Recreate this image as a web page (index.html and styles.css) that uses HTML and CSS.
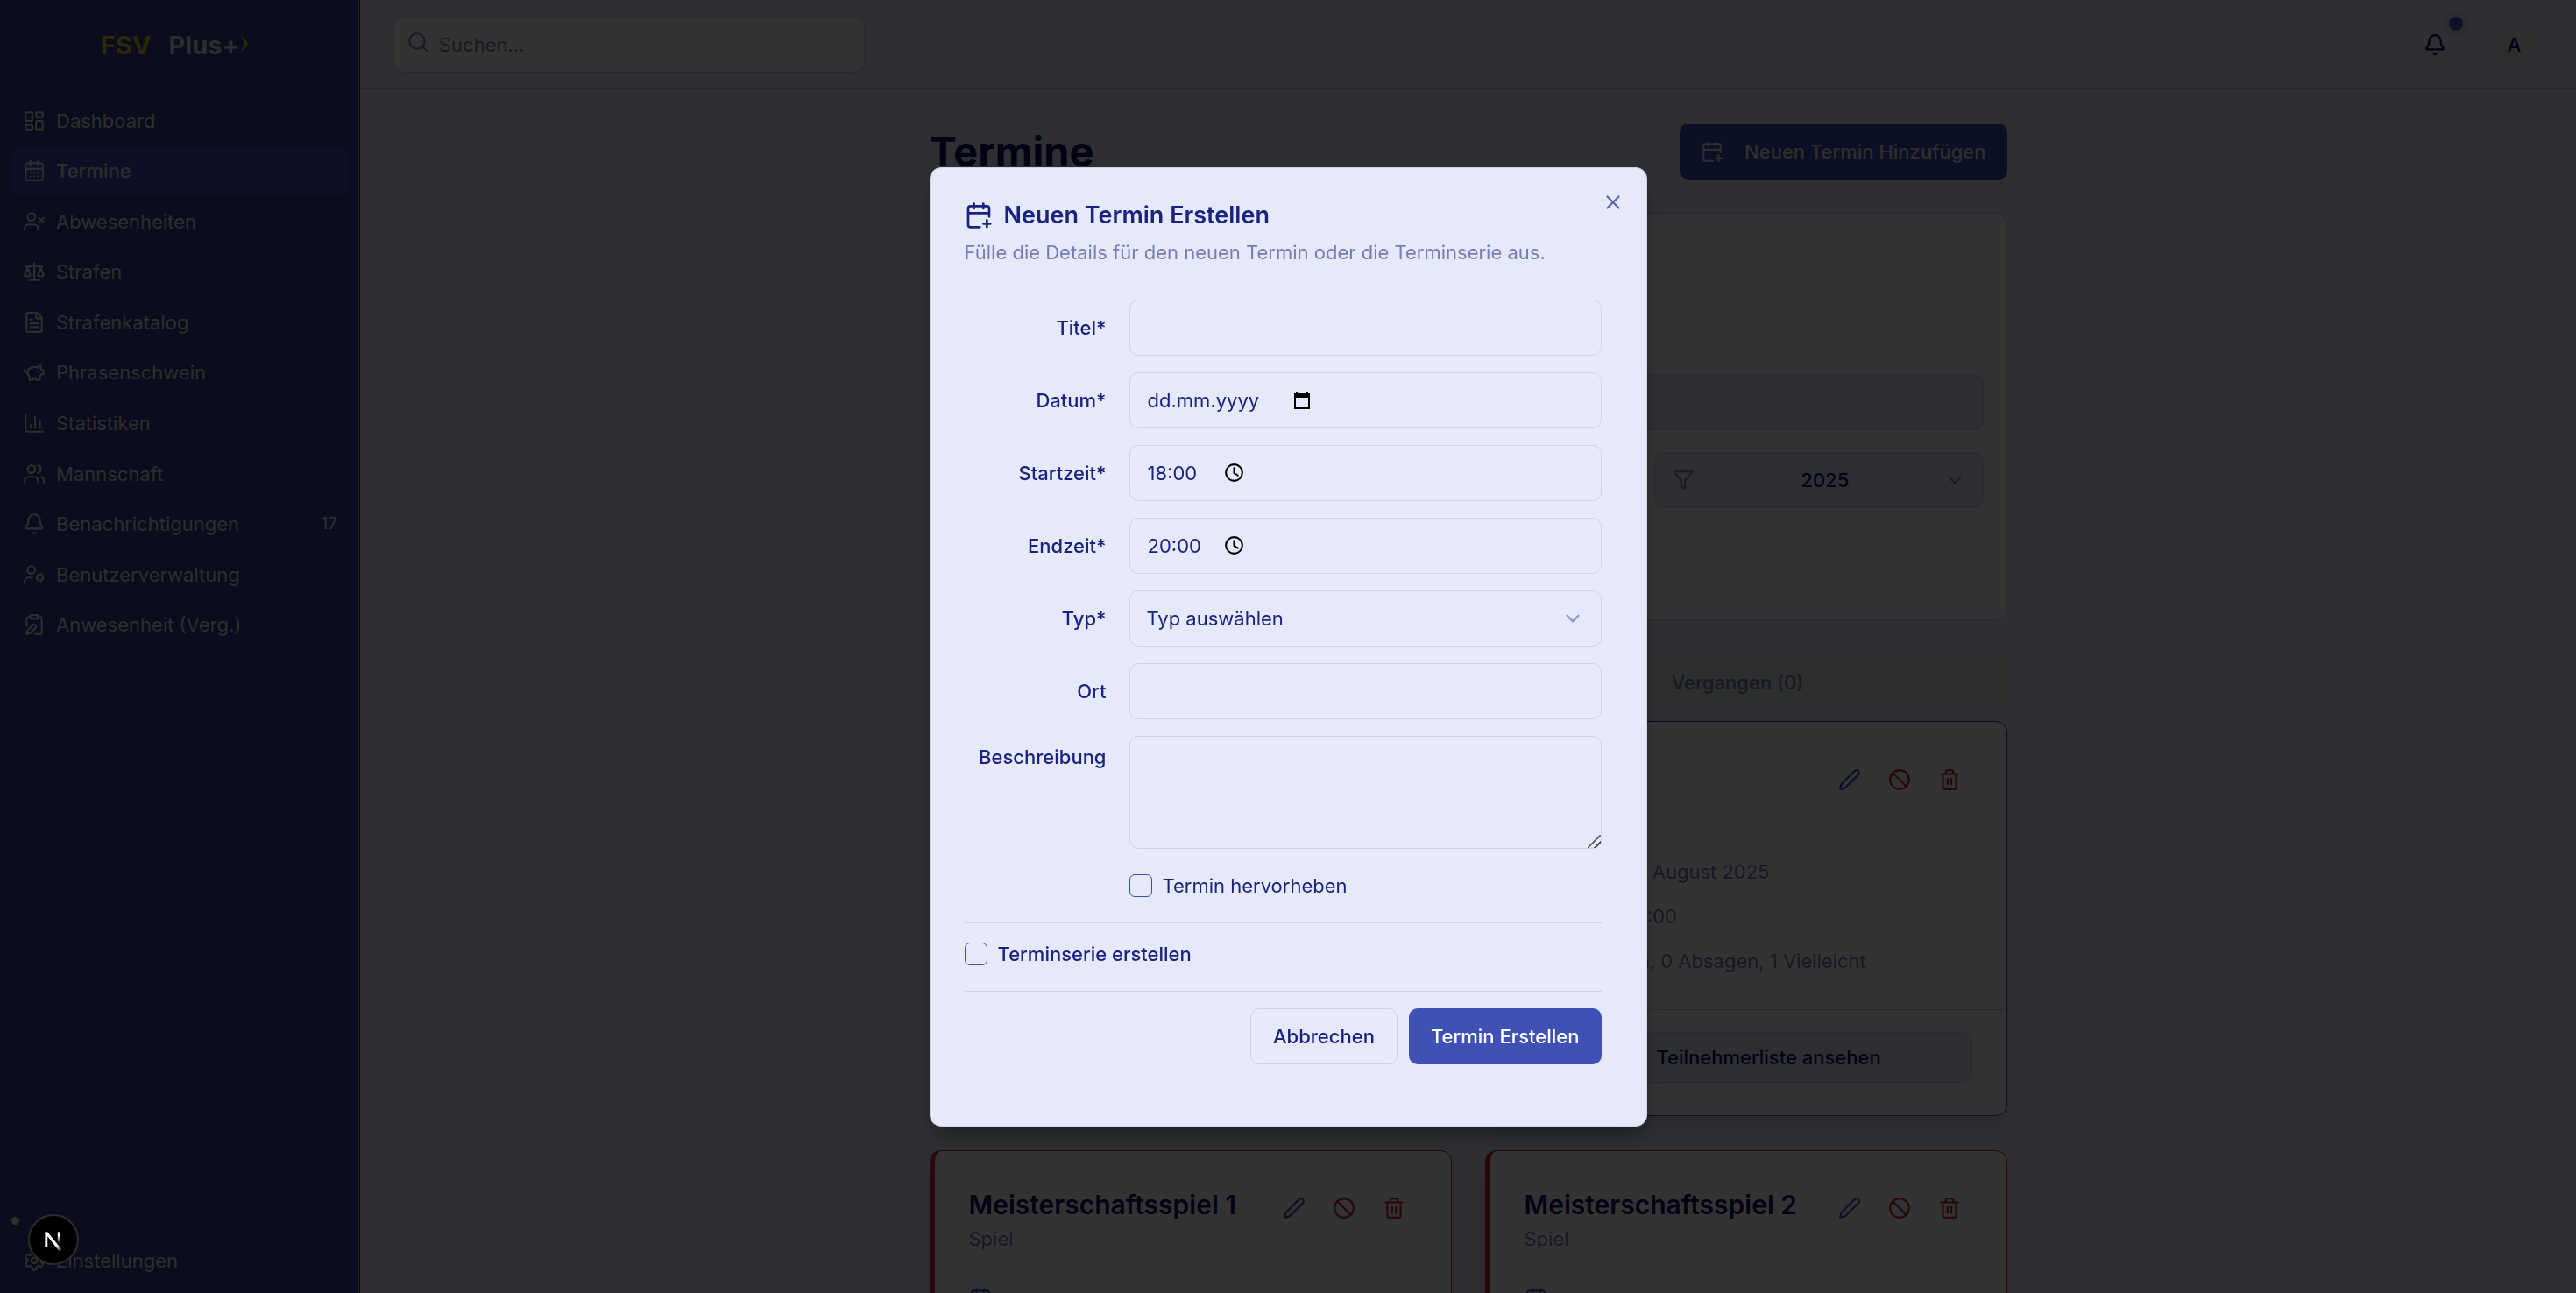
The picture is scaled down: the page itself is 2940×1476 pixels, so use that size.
FILE: index.html
```html
<!DOCTYPE html>
<html lang="de">
<head>
<meta charset="utf-8">
<meta name="viewport" content="width=device-width, initial-scale=1">
<title>Termine – FSV Plus+</title>
<link rel="stylesheet" href="styles.css">
</head>
<body>
<svg class="sprite" aria-hidden="true">
  <symbol id="i-dashboard" viewBox="0 0 24 24"><rect width="7" height="9" x="3" y="3" rx="1"/><rect width="7" height="5" x="14" y="3" rx="1"/><rect width="7" height="9" x="14" y="12" rx="1"/><rect width="7" height="5" x="3" y="16" rx="1"/></symbol>
  <symbol id="i-calendar-days" viewBox="0 0 24 24"><path d="M8 2v4M16 2v4"/><rect width="18" height="18" x="3" y="4" rx="2"/><path d="M3 10h18M8 14h.01M12 14h.01M16 14h.01M8 18h.01M12 18h.01M16 18h.01"/></symbol>
  <symbol id="i-user-x" viewBox="0 0 24 24"><path d="M16 21v-2a4 4 0 0 0-4-4H6a4 4 0 0 0-4 4v2"/><circle cx="9" cy="7" r="4"/><path d="m17 8 5 5M22 8l-5 5"/></symbol>
  <symbol id="i-scale" viewBox="0 0 24 24"><path d="m16 16 3-8 3 8c-.87.65-1.92 1-3 1s-2.13-.35-3-1ZM2 16l3-8 3 8c-.87.65-1.92 1-3 1s-2.13-.35-3-1ZM7 21h10M12 3v18M3 7h2c2 0 5-1 7-2 2 1 5 2 7 2h2"/></symbol>
  <symbol id="i-file" viewBox="0 0 24 24"><path d="M15 2H6a2 2 0 0 0-2 2v16a2 2 0 0 0 2 2h12a2 2 0 0 0 2-2V7Z"/><path d="M14 2v4a2 2 0 0 0 2 2h4M10 9H8M16 13H8M16 17H8"/></symbol>
  <symbol id="i-pig" viewBox="0 0 24 24"><path d="M19 5c-1.500 0-2.800 1.400-3 2-3.500-1.500-11-.3-11 5 0 1.800 0 3 2 4.500V20h4v-2h3v2h4v-4c1-.5 1.700-1 2-2h2v-4h-2c0-1-.5-1.500-1-2V5z"/><path d="M2 9v1c0 1.100.9 2 2 2h1M16 11h.01"/></symbol>
  <symbol id="i-chart" viewBox="0 0 24 24"><path d="M3 3v16a2 2 0 0 0 2 2h16M18 17V9M13 17V5M8 17v-3"/></symbol>
  <symbol id="i-users" viewBox="0 0 24 24"><path d="M16 21v-2a4 4 0 0 0-4-4H6a4 4 0 0 0-4 4v2"/><circle cx="9" cy="7" r="4"/><path d="M22 21v-2a4 4 0 0 0-3-3.870M16 3.130a4 4 0 0 1 0 7.750"/></symbol>
  <symbol id="i-bell" viewBox="0 0 24 24"><path d="M10.268 21a2 2 0 0 0 3.464 0M3.262 15.326A1 1 0 0 0 4 17h16a1 1 0 0 0 .74-1.673C19.410 13.956 18 12.499 18 8A6 6 0 0 0 6 8c0 4.499-1.411 5.956-2.738 7.326"/></symbol>
  <symbol id="i-user-cog" viewBox="0 0 24 24"><circle cx="18" cy="15" r="3"/><circle cx="9" cy="7" r="4"/><path d="M10 15H6a4 4 0 0 0-4 4v2M21.700 16.400l-.9-.3M15.200 13.900l-.9-.3M16.600 18.700l.3-.9M19.100 12.200l.3-.9M19.600 18.700l-.4-1M16.800 12.300l-.4-1M14.300 16.600l1-.4M20.700 13.800l1-.4"/></symbol>
  <symbol id="i-clipboard-pen" viewBox="0 0 24 24"><rect width="8" height="4" x="8" y="2" rx="1"/><path d="M10.420 12.610a2.100 2.100 0 1 1 2.970 2.970L7.950 21 4 22l.99-3.950zM16 4h2a2 2 0 0 1 2 2v14a2 2 0 0 1-2 2h-5.500M4 13.500V6a2 2 0 0 1 2-2h2"/></symbol>
  <symbol id="i-settings" viewBox="0 0 24 24"><path d="M12.220 2h-.44a2 2 0 0 0-2 2v.18a2 2 0 0 1-1 1.730l-.43.25a2 2 0 0 1-2 0l-.15-.08a2 2 0 0 0-2.730.73l-.22.38a2 2 0 0 0 .73 2.730l.15.1a2 2 0 0 1 1 1.720v.51a2 2 0 0 1-1 1.740l-.15.09a2 2 0 0 0-.73 2.730l.22.38a2 2 0 0 0 2.730.73l.15-.08a2 2 0 0 1 2 0l.43.25a2 2 0 0 1 1 1.730V20a2 2 0 0 0 2 2h.44a2 2 0 0 0 2-2v-.18a2 2 0 0 1 1-1.730l.43-.25a2 2 0 0 1 2 0l.15.08a2 2 0 0 0 2.730-.73l.22-.39a2 2 0 0 0-.73-2.730l-.15-.08a2 2 0 0 1-1-1.740v-.5a2 2 0 0 1 1-1.740l.15-.09a2 2 0 0 0 .73-2.730l-.22-.38a2 2 0 0 0-2.730-.73l-.15.08a2 2 0 0 1-2 0l-.43-.25a2 2 0 0 1-1-1.730V4a2 2 0 0 0-2-2z"/><circle cx="12" cy="12" r="3"/></symbol>
  <symbol id="i-search" viewBox="0 0 24 24"><circle cx="11" cy="11" r="8"/><path d="m21 21-4.300-4.300"/></symbol>
  <symbol id="i-calendar-plus" viewBox="0 0 24 24"><path d="M8 2v4M16 2v4M21 13V6a2 2 0 0 0-2-2H5a2 2 0 0 0-2 2v14a2 2 0 0 0 2 2h8M3 10h18M16 19h6M19 16v6"/></symbol>
  <symbol id="i-filter" viewBox="0 0 24 24"><path d="M22 3H2l8 9.460V19l4 2v-8.540z"/></symbol>
  <symbol id="i-chevron" viewBox="0 0 24 24"><path d="m6 9 6 6 6-6"/></symbol>
  <symbol id="i-pencil" viewBox="0 0 24 24"><path d="M21.174 6.812a1 1 0 0 0-3.986-3.987L3.842 16.174a2 2 0 0 0-.5.830l-1.321 4.352a.5.5 0 0 0 .623.622l4.353-1.320a2 2 0 0 0 .830-.497z"/></symbol>
  <symbol id="i-ban" viewBox="0 0 24 24"><circle cx="12" cy="12" r="10"/><path d="m4.900 4.900 14.200 14.200"/></symbol>
  <symbol id="i-trash" viewBox="0 0 24 24"><path d="M3 6h18M19 6v14a2 2 0 0 1-2 2H7a2 2 0 0 1-2-2V6M8 6V4a2 2 0 0 1 2-2h4a2 2 0 0 1 2 2v2M10 11v6M14 11v6"/></symbol>
  <symbol id="i-clock" viewBox="0 0 24 24"><circle cx="12" cy="12" r="9"/><path d="M12 7v5.500l4 2.500"/></symbol>
  <symbol id="i-x" viewBox="0 0 24 24"><path d="M18 6 6 18M6 6l12 12"/></symbol>
</svg>

<div class="app">
  <aside class="sidebar">
    <div class="logo"><span class="logo-club">FSV</span><span>Plus+</span><svg class="logo-mark" viewBox="0 0 10 20"><path d="M1 0 10 10 1 19 5 10Z"/></svg></div>
    <nav class="nav">
      <a class="nav-item" href="#"><svg class="icon"><use href="#i-dashboard"/></svg>Dashboard</a>
      <a class="nav-item active" href="#"><svg class="icon"><use href="#i-calendar-days"/></svg>Termine</a>
      <a class="nav-item" href="#"><svg class="icon"><use href="#i-user-x"/></svg>Abwesenheiten</a>
      <a class="nav-item" href="#"><svg class="icon"><use href="#i-scale"/></svg>Strafen</a>
      <a class="nav-item" href="#"><svg class="icon"><use href="#i-file"/></svg>Strafenkatalog</a>
      <a class="nav-item" href="#"><svg class="icon"><use href="#i-pig"/></svg>Phrasenschwein</a>
      <a class="nav-item" href="#"><svg class="icon"><use href="#i-chart"/></svg>Statistiken</a>
      <a class="nav-item" href="#"><svg class="icon"><use href="#i-users"/></svg>Mannschaft</a>
      <a class="nav-item" href="#"><svg class="icon"><use href="#i-bell"/></svg>Benachrichtigungen<span class="count">17</span></a>
      <a class="nav-item" href="#"><svg class="icon"><use href="#i-user-cog"/></svg>Benutzerverwaltung</a>
      <a class="nav-item" href="#"><svg class="icon"><use href="#i-clipboard-pen"/></svg>Anwesenheit (Verg.)</a>
    </nav>
    <div class="sidebar-foot">
      <span class="foot-dot"></span>
      <a class="nav-item" href="#"><svg class="icon"><use href="#i-settings"/></svg>Einstellungen</a>
    </div>
  </aside>

  <div class="page">
    <header class="topbar">
      <div class="search">
        <svg class="icon"><use href="#i-search"/></svg>
        <input type="search" placeholder="Suchen..." aria-label="Suchen">
      </div>
      <div class="top-actions">
        <button class="bell" type="button" aria-label="Benachrichtigungen"><svg class="icon"><use href="#i-bell"/></svg><span class="bell-dot"></span></button>
        <button class="avatar" type="button">A</button>
      </div>
    </header>

    <main class="content">
      <div class="page-head">
        <h1>Termine</h1>
        <button class="btn btn-primary btn-add" type="button"><svg class="icon"><use href="#i-calendar-plus"/></svg>Neuen Termin Hinzufügen</button>
      </div>

      <section class="filters">
        <input class="filter-field" type="text" aria-label="Termine durchsuchen">
        <div class="filter-grid">
          <div class="filter-select">
            <svg class="icon"><use href="#i-filter"/></svg>
            <select class="filter-field" aria-label="Jahr"><option>2025</option></select>
            <svg class="icon chevron"><use href="#i-chevron"/></svg>
          </div>
        </div>
      </section>

      <div class="tabs"><button class="tab" type="button">Vergangen (0)</button></div>

      <div class="cards">
        <article class="card card-featured">
          <div class="card-actions">
            <button class="act edit" type="button" aria-label="Bearbeiten"><svg class="icon"><use href="#i-pencil"/></svg></button>
            <button class="act" type="button" aria-label="Absagen"><svg class="icon"><use href="#i-ban"/></svg></button>
            <button class="act" type="button" aria-label="Löschen"><svg class="icon"><use href="#i-trash"/></svg></button>
          </div>
          <ul class="facts">
            <li>Montag, 1. August 2025</li>
            <li>18:00 – 20:00</li>
            <li>0 Zusagen, 0 Absagen, 1 Vielleicht</li>
          </ul>
          <div class="card-foot"><button class="btn btn-soft" type="button">Teilnehmerliste ansehen</button></div>
        </article>

        <article class="card card-match">
          <div class="card-head">
            <div><h2>Meisterschaftsspiel 1</h2><p>Spiel</p></div>
            <div class="card-actions">
              <button class="act edit" type="button" aria-label="Bearbeiten"><svg class="icon"><use href="#i-pencil"/></svg></button>
              <button class="act" type="button" aria-label="Absagen"><svg class="icon"><use href="#i-ban"/></svg></button>
              <button class="act" type="button" aria-label="Löschen"><svg class="icon"><use href="#i-trash"/></svg></button>
            </div>
          </div>
          <svg class="icon match-date"><use href="#i-calendar-days"/></svg>
        </article>

        <article class="card card-match">
          <div class="card-head">
            <div><h2>Meisterschaftsspiel 2</h2><p>Spiel</p></div>
            <div class="card-actions">
              <button class="act edit" type="button" aria-label="Bearbeiten"><svg class="icon"><use href="#i-pencil"/></svg></button>
              <button class="act" type="button" aria-label="Absagen"><svg class="icon"><use href="#i-ban"/></svg></button>
              <button class="act" type="button" aria-label="Löschen"><svg class="icon"><use href="#i-trash"/></svg></button>
            </div>
          </div>
          <svg class="icon match-date"><use href="#i-calendar-days"/></svg>
        </article>
      </div>
    </main>
  </div>
</div>

<div class="overlay">
  <div class="dialog" role="dialog" aria-modal="true" aria-labelledby="dlg-title">
    <button class="close" type="button" aria-label="Schließen"><svg class="icon"><use href="#i-x"/></svg></button>
    <h2 class="dialog-title" id="dlg-title"><svg class="icon"><use href="#i-calendar-plus"/></svg>Neuen Termin Erstellen</h2>
    <p class="dialog-desc">Fülle die Details für den neuen Termin oder die Terminserie aus.</p>

    <form class="form">
      <div class="row"><label for="titel">Titel*</label><input class="field" id="titel" type="text"></div>
      <div class="row"><label for="datum">Datum*</label>
        <div class="field picker"><input class="date" id="datum" type="text" value="dd.mm.yyyy"><svg class="cal" viewBox="0 0 24 24"><path fill-rule="evenodd" d="M5 2h2v2h10V2h2v2h2v18H3V4h2zM5 9v11h14V9z"/></svg></div></div>
      <div class="row"><label for="start">Startzeit*</label>
        <div class="field picker"><input class="time" id="start" type="text" value="18:00"><svg class="icon clock"><use href="#i-clock"/></svg></div></div>
      <div class="row"><label for="ende">Endzeit*</label>
        <div class="field picker"><input class="time" id="ende" type="text" value="20:00"><svg class="icon clock"><use href="#i-clock"/></svg></div></div>
      <div class="row"><label for="typ">Typ*</label>
        <div class="select"><select class="field" id="typ"><option>Typ auswählen</option></select><svg class="icon chevron"><use href="#i-chevron"/></svg></div></div>
      <div class="row"><label for="ort">Ort</label><input class="field" id="ort" type="text"></div>
      <div class="row row-top"><label for="beschreibung">Beschreibung</label><textarea class="field area" id="beschreibung"></textarea></div>
      <div class="check check-indent"><input type="checkbox" id="hervorheben"><label for="hervorheben">Termin hervorheben</label></div>
      <div class="check check-series"><input type="checkbox" id="serie"><label for="serie">Terminserie erstellen</label></div>
      <div class="form-foot">
        <button class="btn btn-outline" type="button">Abbrechen</button>
        <button class="btn btn-primary" type="submit">Termin Erstellen</button>
      </div>
    </form>
  </div>
</div>

<button class="dev-badge" type="button" aria-label="Entwicklerwerkzeuge">
  <svg viewBox="0 0 56 56"><defs><linearGradient id="fade-d" x1="0" y1="0" x2="1" y2="1"><stop offset=".7" stop-color="#fff"/><stop offset="1" stop-color="#fff" stop-opacity="0"/></linearGradient><linearGradient id="fade-v" x1="0" y1="0" x2="0" y2="1"><stop offset=".3" stop-color="#fff"/><stop offset="1" stop-color="#fff" stop-opacity="0"/></linearGradient></defs><path d="M18 19h3l17 21-3 2-14-18v13h-3z" fill="url(#fade-d)"/><path d="M33 19h3v14h-3z" fill="url(#fade-v)"/></svg>
</button>
</body>
</html>
```
FILE: styles.css
```css
:root {
  --bg: #e6e9fa;
  --ink: #1a237e;
  --ink-dark: #0a0a64;
  --muted: #757db4;
  --line: #d0d3e6;
  --primary: #3f51b5;
  --danger: #c82828;
}

* { box-sizing: border-box; }

body {
  margin: 0;
  height: 100vh;
  overflow: hidden;
  background: var(--bg);
  color: var(--ink);
  font: 400 22px/32px Inter, "Liberation Sans", sans-serif;
}

button, input, select, textarea { font: inherit; color: inherit; }
button { border: 0; padding: 0; background: none; }
h1, h2, p, ul { margin: 0; padding: 0; }
a { color: inherit; text-decoration: none; }

.sprite { position: absolute; width: 0; height: 0; }

.icon {
  flex: none;
  display: block;
  width: 26px;
  height: 26px;
  fill: none;
  stroke: currentColor;
  stroke-width: 2;
  stroke-linecap: round;
  stroke-linejoin: round;
}

.app {
  display: grid;
  grid-template-columns: 411px 1fr;
  grid-template-rows: minmax(0, 1fr);
  height: 100vh;
}

/* Sidebar */
.sidebar {
  display: flex;
  flex-direction: column;
  background: #3a3d94;
  color: #e2e2d8;
  box-shadow: inset -1px 0 #1e2060, inset -2px 0 #a0a0b0;
}
.logo {
  display: flex;
  align-items: center;
  justify-content: center;
  height: 103px;
  padding-right: 12px;
  font-size: 29px;
  font-weight: 700;
}
.logo-club { color: #f5e61e; margin-right: 20px; opacity: .85; }
.logo-mark { width: 10px; height: 20px; fill: #f5e61e; opacity: .85; margin: 0 0 4px 1px; }
.nav {
  display: grid;
  grid-auto-rows: 1fr;
  row-gap: 6px;
  height: 627px;
  margin: 9px 13px 0;
}
.nav-item {
  display: flex;
  align-items: center;
  gap: 12px;
  padding: 0 13px;
  border-radius: 10px;
}
.nav-item.active { background: #4250b4; font-weight: 500; }
.count { margin-left: auto; font-size: 19px; font-weight: 500; }
.sidebar-foot {
  display: flex;
  flex-direction: column;
  gap: 15px;
  margin: auto 13px 12px;
}
.sidebar-foot .nav-item { height: 51px; }
.foot-dot { width: 9px; height: 9px; border-radius: 50%; background: #e8e8e0; }

/* Top bar */
.topbar {
  display: flex;
  align-items: center;
  justify-content: space-between;
  height: 102px;
  padding: 0 45px 0 38px;
  border-bottom: 1px solid #c4c7d2;
}
.search {
  display: flex;
  align-items: center;
  gap: 11px;
  width: 538px;
  height: 64px;
  padding: 0 14px;
  border: 1px solid #c8cad2;
  border-radius: 12px;
  background: #fff;
  color: var(--muted);
}
.search .icon { margin-bottom: 6px; }
.search input { flex: 1; border: 0; background: none; outline: 0; padding: 0; }
.search input::placeholder { color: var(--muted); opacity: 1; }
.top-actions { display: flex; align-items: center; gap: 52px; color: var(--ink-dark); }
.bell { position: relative; }
.bell-dot {
  position: absolute;
  right: -25px;
  top: -25px;
  width: 28px;
  height: 28px;
  border: 6px solid #dcdcea;
  border-radius: 50%;
  background: #4050c0;
}
.avatar { width: 51px; height: 51px; border-radius: 50%; background: #e0e4e2; font-weight: 500; }

/* Content */
.content { width: 1230px; max-width: 100%; margin: 0 auto; padding-top: 39px; }
.page-head { display: flex; align-items: center; justify-content: space-between; }
h1 { font-size: 47px; line-height: 58px; font-weight: 700; color: var(--ink-dark); }

.btn {
  display: flex;
  align-items: center;
  justify-content: center;
  height: 64px;
  padding: 0 25px;
  border-radius: 10px;
  font-weight: 500;
}
.btn-primary { background: var(--primary); color: #fff; }
.btn-add { gap: 24px; padding: 0 24px; color: #e6e6e0; }

.filters {
  display: flex;
  flex-direction: column;
  gap: 25px;
  margin-top: 38px;
  padding: 183px 26px 127px;
  border: 1px solid #c6c8d2;
  border-radius: 13px;
  background: #fff;
}
.filter-field {
  width: 100%;
  height: 64px;
  border: 1px solid var(--line);
  border-radius: 10px;
  background: var(--bg);
}
.filter-grid { display: grid; grid-template-columns: repeat(3, 1fr); gap: 25px; }
.filter-select { grid-column: 3; display: grid; align-items: center; color: var(--ink-dark); }
.filter-select > * { grid-area: 1 / 1; }
.filter-select .icon { z-index: 1; margin-left: 20px; color: #8286b0; }
.filter-select .chevron { justify-self: end; margin-right: 20px; }
.filter-select select { appearance: none; padding: 0 36px 0 50px; text-align: center; text-align-last: center; font-weight: 500; }

.tabs {
  display: grid;
  grid-template-columns: 1fr 1fr;
  height: 64px;
  margin-top: 39px;
  border-radius: 10px;
  background: #e1e4e6;
}
.tab { grid-column: 2; font-weight: 500; color: var(--muted); }

.cards { display: grid; grid-template-columns: 1fr 1fr; gap: 39px 38px; margin-top: 12px; }
.card {
  border: 1px solid var(--danger);
  border-radius: 13px;
  background: #fff;
  box-shadow: 0 16px 24px -4px rgba(0, 0, 0, .12);
}
.card-featured { grid-column: 2; border-color: #28509c; height: 451px; }
.card-actions { display: flex; justify-content: flex-end; gap: 6px; }
.act { display: grid; place-items: center; width: 51px; height: 51px; color: var(--danger); }
.act.edit { color: var(--primary); }
.card-featured .card-actions { padding: 40px 39px 0 0; }
.facts { list-style: none; padding: 61px 38px 0 77px; color: var(--muted); }
.facts li { padding: 3px 0 16px; }
.card-foot { display: flex; margin-top: 23px; padding: 25px 39px; border-top: 1px solid var(--line); }
.btn-soft {
  width: 100%;
  height: 58px;
  border: 1px solid var(--line);
  padding-left: 77px;
  background: var(--bg);
  color: var(--ink-dark);
}
.card-match { border-left-width: 6px; padding: 39px; }
.card-head { display: flex; justify-content: space-between; }
.card-head h2 { font-size: 30px; line-height: 45px; font-weight: 600; color: var(--ink-dark); }
.card-head p { color: var(--muted); }
.match-date { margin-top: 39px; color: var(--primary); }

/* Dialog */
.overlay {
  position: fixed;
  z-index: 10;
  inset: 0;
  display: flex;
  align-items: center;
  justify-content: center;
  background: rgba(0, 0, 0, .8);
}
.dialog {
  position: relative;
  width: 819px;
  max-width: 100%;
  padding: 38px 51px 70px 39px;
  border: 1px solid var(--line);
  border-radius: 13px;
  background: var(--bg);
  box-shadow: 0 16px 24px -5px rgba(0, 0, 0, .3);
}
.close { position: absolute; top: 26px; right: 25px; color: #5a62a8; }
.dialog-title {
  display: flex;
  align-items: center;
  gap: 13px;
  font-size: 27px;
  line-height: 32px;
  font-weight: 600;
}
.dialog-title .icon { width: 32px; height: 32px; }
.dialog-desc { margin-top: 10px; color: var(--muted); }

.form { display: flex; flex-direction: column; gap: 19px; margin-top: 38px; }
.row { display: grid; grid-template-columns: 162px 1fr; align-items: center; column-gap: 26px; }
.row > label { text-align: right; font-weight: 500; }
.row-top { align-items: start; }
.row-top > label { padding-top: 8px; }
.field {
  display: block;
  width: 100%;
  height: 64px;
  padding: 0 20px;
  border: 1px solid var(--line);
  border-radius: 10px;
  background: var(--bg);
  outline: 0;
}
select.field { padding: 0 19px; }
.area { height: 129px; padding: 13px 20px; }
.area::-webkit-resizer {
  background: linear-gradient(135deg, transparent 46%, #555 47%, #555 53%, transparent 54%, transparent 72%, #555 73%, #555 80%, transparent 81%);
}
.picker { display: flex; align-items: center; }
.picker input { border: 0; padding: 0; background: none; outline: 0; }
.date { width: 164px; }
.time { width: 86px; }
.cal { width: 24px; height: 24px; fill: #000; }
.clock { width: 25px; height: 25px; color: #000; }
.select { display: grid; align-items: center; }
.select > * { grid-area: 1 / 1; }
.select select { appearance: none; }
.select .chevron { justify-self: end; margin-right: 20px; color: #8a91c4; }

.check { display: flex; align-items: center; gap: 12px; }
.check input {
  appearance: none;
  width: 26px;
  height: 26px;
  margin: 0;
  border: 1px solid var(--primary);
  border-radius: 6px;
}
.check-indent { height: 46px; padding-left: 188px; }
.check-series {
  height: 79px;
  border-top: 1px solid var(--line);
  border-bottom: 1px solid var(--line);
  padding-bottom: 6px;
  font-weight: 500;
}
.form-foot { display: flex; justify-content: flex-end; gap: 13px; }
.btn-outline { border: 1px solid var(--line); }

.dev-badge {
  position: fixed;
  z-index: 20;
  left: 32px;
  bottom: 32px;
  width: 58px;
  height: 58px;
  border: 2px solid #2c2c2c;
  border-radius: 50%;
  background: #000;
}
.dev-badge svg { display: block; }
```
